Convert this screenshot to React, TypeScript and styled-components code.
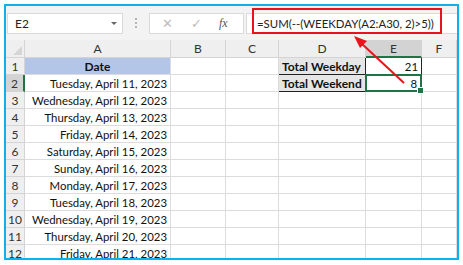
import React from 'react'
import styled, { createGlobalStyle } from 'styled-components'

const GlobalStyle = createGlobalStyle`
  html, body {
    margin: 0;
    padding: 0;
    background: #ffffff;
  }
  body {
    font-family: Lato, "Open Sans", sans-serif;
  }
`

const Frame = styled.div`
  position: relative;
  margin: 4px 0 0 4px;
  width: 451px;
  height: 252px;
  border: 2px solid #0cb1ee;
  background: #f3f3f3;
  overflow: hidden;
`

const FormulaBar = styled.div`
  display: flex;
  align-items: center;
  height: 34px;
  padding: 0 0 0 1px;
  box-sizing: border-box;
`

const NameBox = styled.div`
  display: flex;
  align-items: center;
  justify-content: space-between;
  width: 116px;
  height: 21px;
  box-sizing: border-box;
  padding: 0 5px 0 7px;
  background: #fff;
  border: 1px solid #dadada;
  font-size: 12px;
  color: #222;
`

const Caret = styled.span`
  width: 0;
  height: 0;
  border-left: 3px solid transparent;
  border-right: 3px solid transparent;
  border-top: 3px solid #666;
`

const Dots = styled.div`
  display: flex;
  flex-direction: column;
  gap: 2px;
  margin: 0 12px 0 12px;
  & > span {
    width: 2px;
    height: 2px;
    background: #b5b5b5;
  }
`

const ButtonBox = styled.div`
  display: flex;
  align-items: center;
  width: 95px;
  height: 21px;
  box-sizing: border-box;
  background: #fff;
  border: 1px solid #dadada;
  padding-left: 11px;
`

const ToolButton = styled.span<{ $w: number }>`
  width: ${p => p.$w}px;
  display: flex;
  justify-content: center;
  color: #bdbdbd;
  font-size: 13px;
`

const Fx = styled.span`
  font-family: "Liberation Serif", serif;
  font-style: italic;
  font-size: 12px;
  color: #555;
`

const FormulaInput = styled.div`
  flex: 1;
  height: 21px;
  margin-left: 2px;
  box-sizing: border-box;
  background: #fff;
  border: 1px solid #dadada;
  border-right: none;
  display: flex;
  align-items: center;
  padding-left: 10px;
  font-size: 11.4px;
  color: #222;
`

const Sheet = styled.div`
  display: grid;
  grid-template-columns: 19px 146px 55px 53px 87px 56px 1fr;
  grid-auto-rows: 17px;
  grid-template-rows: 18px;
  background: #fff;
  height: 218px;
  font-size: 11.4px;
`

const ColHead = styled.div<{ $active?: boolean }>`
  display: flex;
  align-items: center;
  justify-content: center;
  background: ${p => (p.$active ? '#d3d3d3' : '#efefef')};
  border-right: 1px solid #d4d4d4;
  border-bottom: ${p => (p.$active ? '2px solid #217346' : '1px solid #d4d4d4')};
  box-sizing: border-box;
  color: #333;
  font-size: 12px;
`

const Corner = styled.div`
  background: #efefef;
  border-right: 1px solid #d4d4d4;
  border-bottom: 1px solid #d4d4d4;
  box-sizing: border-box;
  position: relative;
  &::after {
    content: '';
    position: absolute;
    right: 2px;
    bottom: 2px;
    border-left: 9px solid transparent;
    border-bottom: 9px solid #d6d6d6;
  }
`

const RowHead = styled.div<{ $active?: boolean }>`
  display: flex;
  align-items: center;
  justify-content: center;
  background: ${p => (p.$active ? '#d3d3d3' : '#efefef')};
  border-right: ${p => (p.$active ? '2px solid #217346' : '1px solid #d4d4d4')};
  border-bottom: 1px solid #d4d4d4;
  box-sizing: border-box;
  color: #333;
  font-size: 12px;
`

const Cell = styled.div<{ $align?: string; $bold?: boolean; $bg?: string; $boxed?: boolean }>`
  display: flex;
  align-items: center;
  justify-content: ${p => p.$align || 'flex-start'};
  padding: 0 3px;
  background: ${p => p.$bg || '#fff'};
  border-right: 1px solid ${p => (p.$boxed ? '#222' : '#dcdcdc')};
  border-bottom: 1px solid ${p => (p.$boxed ? '#222' : '#dcdcdc')};
  box-sizing: border-box;
  font-weight: ${p => (p.$bold ? 700 : 400)};
  font-size: ${p => (p.$bold ? '12px' : 'inherit')};
  color: #111;
  white-space: nowrap;
  overflow: hidden;
`

const SelectedCell = styled(Cell)`
  position: relative;
  overflow: visible;
  border: 2px solid #217346;
  margin: -1px 0 0 -1px;
  &::after {
    content: '';
    position: absolute;
    right: -4px;
    bottom: -4px;
    width: 5px;
    height: 5px;
    background: #217346;
    border: 1px solid #fff;
  }
`

const RedBox = styled.div`
  position: absolute;
  left: 246px;
  top: 2px;
  width: 190px;
  height: 26px;
  box-sizing: border-box;
  border: 2px solid #e8141b;
  pointer-events: none;
`

const Arrow = styled.svg`
  position: absolute;
  left: 0;
  top: 0;
  pointer-events: none;
`

const dates = [
  'Tuesday, April 11, 2023',
  'Wednesday, April 12, 2023',
  'Thursday, April 13, 2023',
  'Friday, April 14, 2023',
  'Saturday, April 15, 2023',
  'Sunday, April 16, 2023',
  'Monday, April 17, 2023',
  'Tuesday, April 18, 2023',
  'Wednesday, April 19, 2023',
  'Thursday, April 20, 2023',
  'Friday, April 21, 2023',
]

const cols = ['A', 'B', 'C', 'D', 'E', 'F']

const App: React.FC = () => {
  return (
    <>
      <GlobalStyle />
      <Frame>
        <FormulaBar>
          <NameBox>
            E2
            <Caret />
          </NameBox>
          <Dots>
            <span />
            <span />
            <span />
          </Dots>
          <ButtonBox>
            <ToolButton $w={12}>✕</ToolButton>
            <ToolButton $w={46}>✓</ToolButton>
            <Fx>fx</Fx>
          </ButtonBox>
          <FormulaInput>=SUM(--(WEEKDAY(A2:A30, 2)&gt;5))</FormulaInput>
        </FormulaBar>
        <Sheet>
          <Corner />
          {cols.map(c => (
            <ColHead key={c} $active={c === 'E'}>
              {c}
            </ColHead>
          ))}

          <RowHead>1</RowHead>
          <Cell $align="center" $bold $bg="#b4c6e7">Date</Cell>
          <Cell />
          <Cell />
          <Cell $bold $bg="#e7e6e6" $boxed>Total Weekday</Cell>
          <Cell $align="flex-end" $boxed>21</Cell>
          <Cell />

          <RowHead $active>2</RowHead>
          <Cell $align="flex-end">{dates[0]}</Cell>
          <Cell />
          <Cell />
          <Cell $bold $bg="#e7e6e6" $boxed>Total Weekend</Cell>
          <SelectedCell $align="flex-end">8</SelectedCell>
          <Cell />

          {dates.slice(1).map((d, i) => (
            <React.Fragment key={d}>
              <RowHead>{i + 3}</RowHead>
              <Cell $align="flex-end">{d}</Cell>
              <Cell />
              <Cell />
              <Cell />
              <Cell />
              <Cell />
            </React.Fragment>
          ))}
        </Sheet>
        <RedBox />
        <Arrow width="451" height="252" viewBox="0 0 451 252">
          <line x1="398" y1="77" x2="355" y2="37" stroke="#e8141b" strokeWidth="2" />
          <polygon points="348,30 361,35 354,42" fill="#e8141b" />
        </Arrow>
      </Frame>
    </>
  )
}

export default App
